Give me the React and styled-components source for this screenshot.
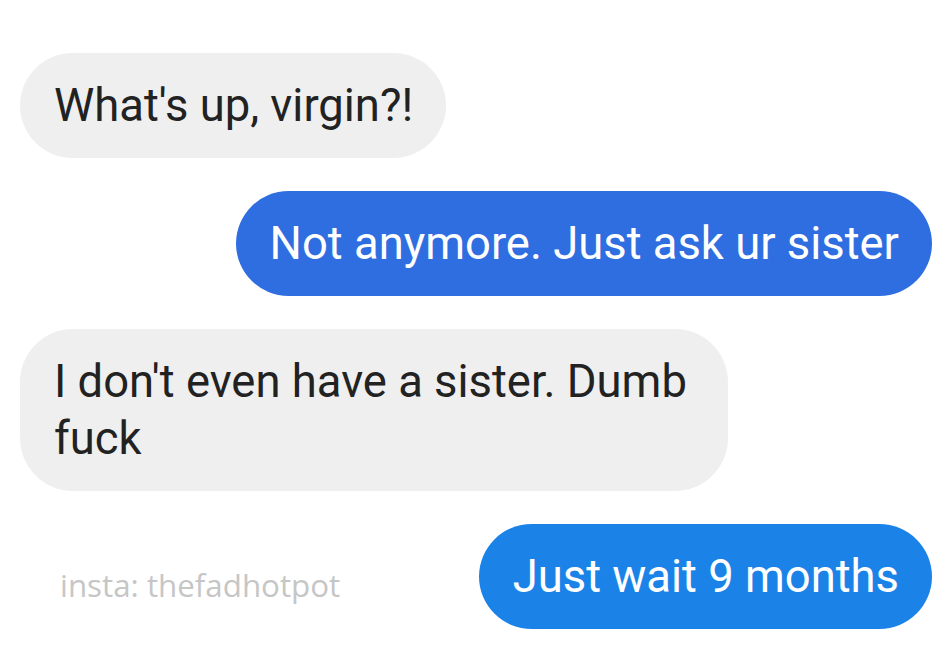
import React from "react";
import styled, { createGlobalStyle } from "styled-components";

const Global = createGlobalStyle`
  html, body { margin: 0; padding: 0; background: #ffffff; }
  body { width: 951px; height: 648px; overflow: hidden; }
`;

const Thread = styled.div`
  display: flex;
  flex-direction: column;
  gap: 33px;
  padding: 53px 19px 0 20px;
  font-family: Roboto, "Noto Sans", sans-serif;
`;

const Row = styled.div`
  display: flex;
  align-items: center;
  justify-content: ${(p) => (p.$mine ? "flex-end" : "flex-start")};
`;

const FooterRow = styled(Row)`
  justify-content: space-between;
`;

const Bubble = styled.div`
  box-sizing: border-box;
  max-width: ${(p) => p.$max || "none"};
  padding: 24px 33px 24px 34px;
  border-radius: 53px;
  font-size: 45.4px;
  line-height: 57px;
  color: ${(p) => (p.$mine ? "#ffffff" : "#222222")};
  background: ${(p) => p.$bg || "#efefef"};
`;

const Watermark = styled.div`
  margin: 17px 0 0 40px;
  font-family: "Open Sans", "Noto Sans", sans-serif;
  font-size: 31.3px;
  color: #c6c6c6;
`;

export default function App() {
  return (
    <>
      <Global />
      <Thread>
        <Row>
          <Bubble>What's up, virgin?!</Bubble>
        </Row>
        <Row $mine>
          <Bubble $mine $bg="#2f6ee0">
            Not anymore. Just ask ur sister
          </Bubble>
        </Row>
        <Row>
          <Bubble $max="708px">I don't even have a sister. Dumb fuck</Bubble>
        </Row>
        <FooterRow>
          <Watermark>insta: thefadhotpot</Watermark>
          <Bubble $mine $bg="#1b83e8">
            Just wait 9 months
          </Bubble>
        </FooterRow>
      </Thread>
    </>
  );
}
